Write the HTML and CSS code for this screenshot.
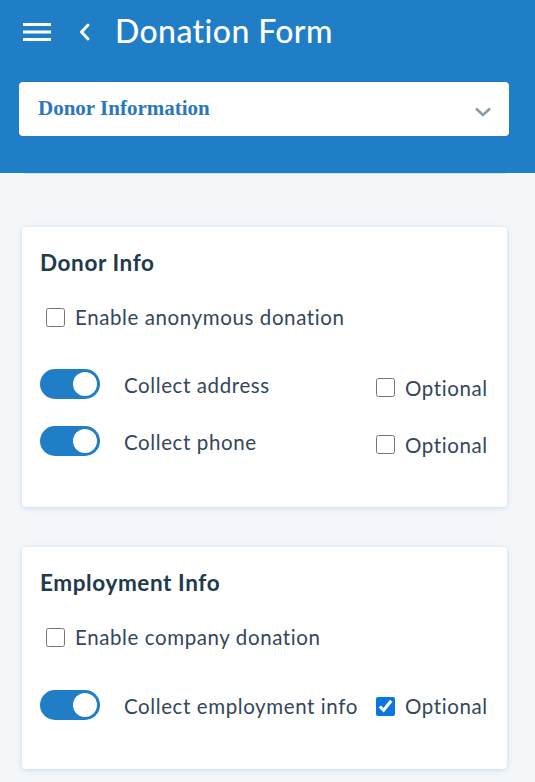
FILE: index.html
```html
<!DOCTYPE html>
<html>
<head>
<meta charset="utf-8">
<link rel="stylesheet" href="styles.css">
</head>
<body>
<header class="header">
  <div class="topbar">
    <svg class="menu" width="28" height="20" viewBox="0 0 28 20"><rect x="0" y="1" width="28" height="3" fill="#fff"/><rect x="0" y="8.5" width="28" height="3" fill="#fff"/><rect x="0" y="16" width="28" height="3" fill="#fff"/></svg>
    <svg class="back" width="14" height="20" viewBox="0 0 14 20"><path d="M10 3 L3.5 10 L10 17" fill="none" stroke="#fff" stroke-width="3" stroke-linecap="round" stroke-linejoin="round"/></svg>
    <h1 class="title">Donation Form</h1>
  </div>
  <div class="select">
    <span class="select-text">Donor Information</span>
    <svg class="caret" width="18" height="12" viewBox="0 0 18 12"><path d="M2 2.5 L9 9 L16 2.5" fill="none" stroke="#8a9ba8" stroke-width="2.6"/></svg>
  </div>
</header>
<div class="rule"></div>
<main class="main">
  <section class="card card-donor">
    <h2 class="card-title">Donor Info</h2>
    <label class="check-row"><input type="checkbox" class="cb"><span>Enable anonymous donation</span></label>
    <div class="toggles">
      <div class="toggle-row">
        <span class="toggle"><span class="knob"></span></span>
        <span class="toggle-label">Collect address</span>
        <label class="opt"><input type="checkbox" class="cb"><span>Optional</span></label>
      </div>
      <div class="toggle-row">
        <span class="toggle"><span class="knob"></span></span>
        <span class="toggle-label">Collect phone</span>
        <label class="opt"><input type="checkbox" class="cb"><span>Optional</span></label>
      </div>
    </div>
  </section>
  <section class="card card-employ">
    <h2 class="card-title">Employment Info</h2>
    <label class="check-row"><input type="checkbox" class="cb"><span>Enable company donation</span></label>
    <div class="toggles">
      <div class="toggle-row">
        <span class="toggle"><span class="knob"></span></span>
        <span class="toggle-label">Collect employment info</span>
        <label class="opt"><input type="checkbox" class="cb" checked><span>Optional</span></label>
      </div>
    </div>
  </section>
</main>
</body>
</html>
```

FILE: styles.css
```css
* { box-sizing: border-box; }
html, body { margin: 0; padding: 0; }
body {
  background: #f3f7fa;
  font-family: Lato, "Open Sans", sans-serif;
  color: #33475b;
  width: 535px;
  height: 782px;
  overflow: hidden;
}
.header {
  background: #1f7ec6;
  height: 173px;
  padding: 11px 26px 0 19px;
}
.topbar {
  display: flex;
  align-items: center;
  height: 40px;
  padding-left: 4px;
}
.menu { display: block; margin-top: 2px; }
.back { display: block; margin-left: 27px; margin-top: 2px; }
.title {
  margin: 0 0 0 23px;
  color: #fff;
  font-size: 32px;
  font-weight: 500;
  line-height: 40px;
  letter-spacing: 0.4px;
}
.select {
  margin-top: 31px;
  height: 54px;
  width: 490px;
  background: #fff;
  border-radius: 4px;
  display: flex;
  align-items: center;
  justify-content: space-between;
  padding: 0 17px 0 19px;
}
.select-text {
  font-family: "Liberation Serif", serif;
  font-weight: bold;
  font-size: 21px;
  color: #2b77bd;
  margin-top: -2px;
}
.caret { display: block; margin-top: 6px; }
.rule {
  height: 1px;
  margin: 0 30px 0 24px;
  background: #cfe0ee;
}
.main {
  padding: 53px 28px 0 22px;
  display: flex;
  flex-direction: column;
  gap: 40px;
}
.card {
  background: #fff;
  border-radius: 4px;
  box-shadow: 0 1px 5px rgba(120, 160, 200, 0.35);
  padding: 22px 19px 0 18px;
}
.card-donor { height: 280px; }
.card-employ { height: 222px; padding-top: 22px; }
.card-title {
  margin: 0;
  font-size: 22.5px;
  font-weight: 700;
  color: #213a4b;
  line-height: 28px;
  letter-spacing: 0.6px;
}
.check-row {
  display: flex;
  align-items: center;
  gap: 10px;
  margin: 27px 0 0 6px;
  font-size: 20.5px;
  letter-spacing: 0.6px;
  line-height: 26px;
}
.cb {
  width: 19px;
  height: 19px;
  margin: 0;
  accent-color: #0b75e0;
  flex: none;
}
.toggles {
  margin-top: 39px;
  display: flex;
  flex-direction: column;
  gap: 27px;
}
.card-employ .toggles { margin-top: 40px; }
.toggle-row {
  display: flex;
  align-items: center;
  height: 30px;
}
.toggle {
  width: 60px;
  height: 30px;
  border-radius: 15px;
  background: #1f7ec6;
  position: relative;
  flex: none;
}
.knob {
  position: absolute;
  right: 3px;
  top: 3px;
  width: 24px;
  height: 24px;
  border-radius: 50%;
  background: #fff;
}
.toggle-label {
  margin-left: 24px;
  font-size: 20.5px;
  letter-spacing: 0.6px;
  flex: 1;
  margin-top: 1px;
  white-space: nowrap;
}
.opt {
  display: flex;
  align-items: center;
  gap: 10px;
  font-size: 20.5px;
  letter-spacing: 0.6px;
  margin-top: 7px;
  width: 112px;
  flex: none;
}
.card-employ .opt { margin-top: 2px; }
```
